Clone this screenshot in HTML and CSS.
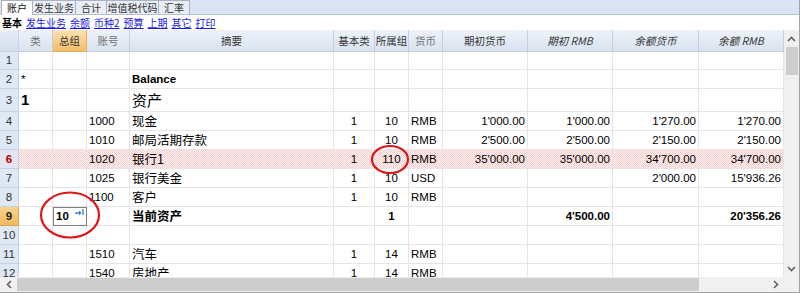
FILE: index.html
```html
<!DOCTYPE html>
<html lang="zh">
  <head>
    <meta charset="UTF-8" />
    <meta name="viewport" content="width=device-width, initial-scale=1.0" />
    <title>账户</title>
    <link rel="stylesheet" href="styles.css">
  </head>
  <body>
    <div class="app">
      <div class="tabs">
        <span class="tab active" style="width:32px">账户</span>
        <span class="tab" style="width:44px">发生业务</span>
        <span class="tab" style="width:32px">合计</span>
        <span class="tab" style="width:53px">增值税代码</span>
        <span class="tab" style="width:32px">汇率</span>
      </div>
      <div class="views">
        <b>基本</b>
        <a href="#">发生业务</a>
        <a href="#">余额</a>
        <a href="#">币种2</a>
        <a href="#">预算</a>
        <a href="#">上期</a>
        <a href="#">其它</a>
        <a href="#">打印</a>
      </div>
      <div class="main">
        <div class="sheet">
          <div class="r hd">
            <span></span>
            <span class="dim">类</span>
            <span class="sel">总组</span>
            <span class="dim">账号</span>
            <span>摘要</span>
            <span>基本类</span>
            <span>所属组</span>
            <span class="dim">货币</span>
            <span>期初货币</span>
            <span class="it">期初 RMB</span>
            <span class="it">余额货币</span>
            <span class="it">余额 RMB</span>
          </div>
          <div class="r first">
            <span>1</span><span></span><span></span><span></span><span></span><span></span><span></span><span></span><span></span><span></span><span></span><span></span>
          </div>
          <div class="r">
            <span>2</span><span>*</span><span></span><span></span><span class="b">Balance</span><span></span><span></span><span></span><span></span><span></span><span></span><span></span>
          </div>
          <div class="r tall">
            <span>3</span><span class="big b">1</span><span></span><span></span><span class="zh big">资产</span><span></span><span></span><span></span><span></span><span></span><span></span><span></span>
          </div>
          <div class="r">
            <span>4</span><span></span><span></span><span>1000</span><span class="zh">现金</span><span class="m">1</span><span class="m">10</span><span>RMB</span><span class="n">1'000.00</span><span class="n">1'000.00</span><span class="n">1'270.00</span><span class="n">1'270.00</span>
          </div>
          <div class="r">
            <span>5</span><span></span><span></span><span>1010</span><span class="zh">邮局活期存款</span><span class="m">1</span><span class="m">10</span><span>RMB</span><span class="n">2'500.00</span><span class="n">2'500.00</span><span class="n">2'150.00</span><span class="n">2'150.00</span>
          </div>
          <div class="r err">
            <span>6</span><span></span><span></span><span>1020</span><span class="zh">银行1</span><span class="m">1</span><span class="m">110</span><span>RMB</span><span class="n">35'000.00</span><span class="n">35'000.00</span><span class="n">34'700.00</span><span class="n">34'700.00</span>
          </div>
          <div class="r">
            <span>7</span><span></span><span></span><span>1025</span><span class="zh">银行美金</span><span class="m">1</span><span class="m">10</span><span>USD</span><span></span><span></span><span class="n">2'000.00</span><span class="n">15'936.26</span>
          </div>
          <div class="r">
            <span>8</span><span></span><span></span><span>1100</span><span class="zh">客户</span><span class="m">1</span><span class="m">10</span><span>RMB</span><span></span><span></span><span></span><span></span>
          </div>
          <div class="r cur">
            <span>9</span><span></span>
            <span class="ed">10<svg class="edicon" width="9" height="7" viewBox="0 0 9 7"><path d="M0 4h5" stroke="#3a78d4" stroke-width="1.4"/><path d="M4 1.5l2.5 2.5-2.5 2.5z" fill="#3a78d4"/><rect x="7" y="0" width="2" height="6" fill="#7fa9e6"/></svg></span>
            <span></span><span class="zh b">当前资产</span><span></span><span class="m b">1</span><span></span><span></span><span class="n b">4'500.00</span><span></span><span class="n b">20'356.26</span>
          </div>
          <div class="r">
            <span>10</span><span></span><span></span><span></span><span></span><span></span><span></span><span></span><span></span><span></span><span></span><span></span>
          </div>
          <div class="r">
            <span>11</span><span></span><span></span><span>1510</span><span class="zh">汽车</span><span class="m">1</span><span class="m">14</span><span>RMB</span><span></span><span></span><span></span><span></span>
          </div>
          <div class="r">
            <span>12</span><span></span><span></span><span>1540</span><span class="zh">房地产</span><span class="m">1</span><span class="m">14</span><span>RMB</span><span></span><span></span><span></span><span></span>
          </div>
          <svg class="marks" width="784" height="247">
            <ellipse cx="70" cy="185" rx="29" ry="22.5" />
            <ellipse cx="390" cy="129.5" rx="18" ry="13.5" />
          </svg>
        </div>
        <div class="vscroll">
          <div class="arrow"><svg width="9" height="6" viewBox="0 0 9 6"><path d="M1 5l3.5-3.5L8 5" /></svg></div>
          <div class="vthumb"></div>
          <div class="fill"></div>
          <div class="arrow"><svg width="9" height="6" viewBox="0 0 9 6"><path d="M1 1l3.5 3.5L8 1" /></svg></div>
        </div>
      </div>
      <div class="hscroll">
        <div class="arrow"><svg width="6" height="9" viewBox="0 0 6 9"><path d="M5 1L1.5 4.5 5 8" /></svg></div>
        <div class="hthumb"></div>
        <div class="fill"></div>
        <div class="arrow"><svg width="6" height="9" viewBox="0 0 6 9"><path d="M1 1l3.5 3.5L1 8" /></svg></div>
        <div class="corner"></div>
      </div>
    </div>
  </body>
</html>
```

FILE: styles.css
```css
* {
  box-sizing: border-box;
}
body {
  margin: 0;
  font-family: "Liberation Sans", "Noto Sans CJK SC", sans-serif;
  font-size: 11.5px;
  color: #000;
}
.app {
  width: 800px;
  height: 293px;
  display: flex;
  flex-direction: column;
  border-right: 1px solid #a3a3a3;
  border-bottom: 1px solid #a3a3a3;
  overflow: hidden;
}
.tabs {
  height: 15px;
  flex: none;
  display: flex;
  align-items: flex-end;
  padding-left: 1px;
  background: #dbe4f4;
  border-bottom: 1px solid #b4bfd1;
}
.tab {
  height: 14px;
  margin-right: -1px;
  border: 1px solid #a7b1c2;
  border-bottom: none;
  background: #e9eef6;
  font-family: "Noto Sans CJK SC", sans-serif;
  font-size: 10px;
  line-height: 13px;
  text-align: center;
  white-space: nowrap;
  color: #333;
}
.tab.active {
  height: 15px;
  margin-bottom: -1px;
  background: #fff;
  color: #111;
}
.views {
  height: 15px;
  flex: none;
  display: flex;
  gap: 4px;
  padding-left: 2px;
  font-family: "Noto Sans CJK SC", sans-serif;
  font-size: 10px;
  line-height: 15px;
  background: #fff;
}
.views a {
  color: #1a1ae8;
}
.main {
  height: 247px;
  flex: none;
  display: flex;
}
.sheet {
  width: 784px;
  position: relative;
  overflow: hidden;
}
.r {
  display: grid;
  grid-template-columns: 19px 34px 34px 43px 204px 41px 34px 34px 85px 85px 86px 85px;
  height: 19px;
}
.r > span {
  padding: 0 2px;
  border-right: 1px solid #e5e5e5;
  border-bottom: 1px solid #e5e5e5;
  line-height: 18px;
  white-space: nowrap;
  overflow: hidden;
}
.r > span:first-child {
  padding: 0;
  text-align: center;
  color: #333;
  background: #dfe8f5;
  border-color: #c7d3e5;
}
.r.first {
  height: 18px;
}
.r.first > span {
  line-height: 17px;
}
.r.tall {
  height: 23px;
}
.r.tall > span {
  line-height: 22px;
}
.hd {
  height: 22px;
  background: linear-gradient(#eef3fa, #d8e1ee);
}
.hd > span {
  padding: 0;
  font-family: "Noto Sans CJK SC", sans-serif;
  font-size: 10.5px;
  line-height: 21px;
  text-align: center;
  color: #333;
  border-color: #c4cfdf;
}
.hd > span:first-child {
  background: linear-gradient(#e6edf8, #d3ddec);
}
.hd .dim {
  color: #707070;
}
.hd .sel {
  background: linear-gradient(#fbe2b3, #f3bd69);
  border-color: #e2ae5c;
}
.hd .it {
  font-style: italic;
}
.zh {
  font-family: "Noto Sans CJK SC", sans-serif;
  font-size: 12.5px;
}
.big {
  font-size: 15px;
}
.b {
  font-weight: bold;
}
.n {
  text-align: right;
}
.m {
  text-align: center;
}
.err > span {
  background: repeating-conic-gradient(#f8cccc 0 25%, #fef3f3 0 50%) 0 0 / 2px 2px;
}
.err > span:first-child {
  color: #c00000;
  font-weight: bold;
  background: #e3e6f2;
}
.cur > span:first-child {
  font-weight: bold;
  color: #222;
  background: linear-gradient(#f9d28c, #f2b95e);
  border-color: #dba651;
}
.ed {
  position: relative;
  padding-left: 2px;
  font-weight: bold;
  background: #fff;
  border: 1px solid #808080 !important;
  line-height: 17px !important;
}
.edicon {
  position: absolute;
  top: 1px;
  right: 2px;
}
.marks {
  position: absolute;
  top: 0;
  left: 0;
  pointer-events: none;
}
.marks ellipse {
  fill: none;
  stroke: #e01515;
  stroke-width: 2.2;
}
.vscroll {
  width: 15px;
  display: flex;
  flex-direction: column;
  align-items: center;
  background: #f0f0f0;
}
.arrow {
  width: 17px;
  height: 17px;
  flex: none;
  display: flex;
  align-items: center;
  justify-content: center;
}
.arrow path {
  fill: none;
  stroke: #606060;
  stroke-width: 1.6;
}
.vthumb {
  width: 12px;
  height: 28px;
  background: #cdcdcd;
}
.fill {
  flex: 1;
}
.hscroll {
  height: 15px;
  flex: none;
  display: flex;
  align-items: center;
  background: #f0f0f0;
}
.hthumb {
  width: 682px;
  height: 13px;
  background: #cdcdcd;
}
.corner {
  width: 15px;
  height: 15px;
}
```
